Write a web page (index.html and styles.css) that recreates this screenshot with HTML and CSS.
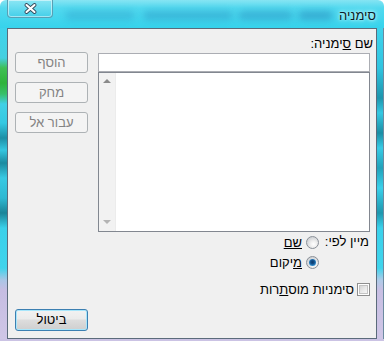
FILE: index.html
```html
<!DOCTYPE html>
<html lang="he">
<head>
<meta charset="utf-8">
<title>סימניה</title>
<link rel="stylesheet" href="styles.css">
</head>
<body>
<div class="window">
  <div class="titlebar">
    <div class="close">
      <svg width="13" height="11" viewBox="0 0 13 11">
        <path d="M2.5 2 L10.5 9 M10.5 2 L2.5 9" stroke="#34485a" stroke-width="3.8" stroke-linecap="round" fill="none"/>
        <path d="M2.5 2 L10.5 9 M10.5 2 L2.5 9" stroke="#ffffff" stroke-width="2.1" stroke-linecap="round" fill="none"/>
      </svg>
    </div>
    <div class="blur-area"><div class="smudge s1"></div><div class="smudge s2"></div><div class="smudge s3"></div><div class="smudge s4"></div></div>
    <div class="title">סימניה</div>
  </div>
  <div class="middle">
    <div class="edge edge-left"></div>
    <div class="client">
      <div class="top-row">
        <div class="main-col">
          <div class="label name-label">שם <u>ס</u>ימניה:</div>
          <div class="textbox"></div>
          <div class="listbox">
            <div class="list-items"></div>
            <div class="scrollbar">
              <span class="arrow up"></span>
              <span class="arrow down"></span>
            </div>
          </div>
          <div class="sort">
            <div class="sort-label">מיין לפי:</div>
            <div class="radios">
              <div class="option"><span class="radio"></span><span><u>שם</u></span></div>
              <div class="option"><span class="radio checked"></span><span><u>מ</u>יקום</span></div>
            </div>
          </div>
        </div>
        <div class="btn-col">
          <div class="btn disabled">הוסף</div>
          <div class="btn disabled">מחק</div>
          <div class="btn disabled">עבור אל</div>
        </div>
      </div>
      <div class="check-row"><span class="checkbox"></span><span>סימניות מוס<u>ת</u>רות</span></div>
      <div class="bottom-row"><div class="btn default">ביטול</div></div>
    </div>
    <div class="edge edge-right"></div>
  </div>
  <div class="bottom-edge"></div>
</div>
</body>
</html>
```
FILE: styles.css
```css
html, body {
  margin: 0;
  padding: 0;
  width: 384px;
  height: 341px;
  overflow: hidden;
  background: #ffffff;
}
body {
  font-family: "Liberation Sans", Arial, sans-serif;
  font-size: 13px;
  color: #000;
}
.window {
  width: 384px;
  height: 341px;
  display: flex;
  flex-direction: column;
  background: linear-gradient(to bottom, #86e4f3 0, #52d9ef 8px, #36d3ec 28px);
  border-radius: 6px 6px 0 0;
  overflow: hidden;
}
.titlebar {
  height: 28px;
  display: flex;
  flex-direction: row;
  align-items: flex-start;
}
.close {
  margin-left: 7px;
  width: 44px;
  height: 17px;
  border: 1px solid #5a9fb4;
  border-top: none;
  border-radius: 0 0 4px 4px;
  background: linear-gradient(to bottom, #8be6f4 0, #66dbef 50%, #45cfe9 100%);
  box-shadow: inset 0 0 0 1px rgba(255,255,255,0.5);
  display: flex;
  align-items: center;
  justify-content: center;
}
.blur-area {
  flex: 1;
  height: 28px;
  position: relative;
}
.smudge {
  position: absolute;
  top: 11px;
  height: 9px;
  border-radius: 5px;
  background: #2a8fbf;
  filter: blur(3.5px);
}
.s1 { left: 12px; width: 70px; opacity: 0.35; }
.s2 { left: 90px; width: 90px; opacity: 0.45; }
.s3 { left: 185px; width: 55px; opacity: 0.5; }
.s4 { left: 245px; width: 35px; opacity: 0.6; }
.title {
  margin-right: 8px;
  margin-top: 8px;
  direction: rtl;
  font-size: 13px;
  color: #0b1a26;
  text-shadow: 0 0 6px #d9fbff, 0 0 3px #d9fbff;
}
.middle {
  display: flex;
  flex-direction: row;
  height: 311px;
}
.edge {
  width: 7px;
  height: 311px;
}
.edge-left {
  background: linear-gradient(to bottom,
    #3fd3ec 0, #44cfe0 30px, #3fbf55 40px, #2fb33c 55px, #37c06a 66px, #3fd0e6 76px,
    #34c8e2 95px, #1d8fa6 110px, #34c6e0 122px, #1b8aa0 135px, #38c9e3 150px,
    #2eb8d2 170px, #1a8498 185px, #3ad0ea 200px, #3fd4ec 240px, #a9c6e6 252px,
    #c6bde2 262px, #cfc6e6 311px);
}
.edge-right {
  background: linear-gradient(to bottom,
    #3fd3ec 0, #30c4e0 40px, #1e95ad 70px, #35c8e2 85px, #1b8ea5 105px, #38cbe5 120px,
    #22a2ba 140px, #3ad0ea 160px, #1f97ae 185px, #3ad1eb 200px, #3fd4ec 240px,
    #aecbe8 252px, #c8bfe3 262px, #cfc6e6 311px);
  box-shadow: inset -1px 0 0 #6c8aa0;
}
.bottom-edge {
  flex: 1;
  background: #cbc3e4;
}
.client {
  width: 370px;
  height: 311px;
  box-sizing: border-box;
  border: 1px solid #5b6b7b;
  background: #f0f0f0;
  direction: rtl;
  display: flex;
  flex-direction: column;
  padding: 7px 6px 0 7px;
}
.top-row {
  display: flex;
  flex-direction: row;
  gap: 10px;
}
.main-col {
  width: 272px;
  display: flex;
  flex-direction: column;
}
.label {
  height: 17px;
  line-height: 15px;
}
.name-label {
  margin-right: -3px;
}
.textbox {
  height: 19px;
  box-sizing: border-box;
  border: 1px solid #abadb3;
  background: #fff;
}
.listbox {
  height: 160px;
  box-sizing: border-box;
  border: 1px solid #828790;
  background: #fff;
  display: flex;
  flex-direction: row;
}
.list-items {
  flex: 1;
}
.scrollbar {
  width: 17px;
  background: #f2f2f2;
  display: flex;
  flex-direction: column;
  justify-content: space-between;
  align-items: center;
  padding: 6px 0 7px;
  box-sizing: border-box;
  border-right: 1px solid #ececec;
}
.arrow {
  width: 0;
  height: 0;
  border-left: 4px solid transparent;
  border-right: 4px solid transparent;
}
.arrow.up { border-bottom: 4px solid #8a8a8a; }
.arrow.down { border-top: 4px solid #b4b4b4; }
.sort {
  display: flex;
  flex-direction: row;
  padding-right: 1px;
}
.sort-label {
  width: 50px;
  height: 20px;
  line-height: 20px;
  white-space: nowrap;
}
.radios {
  display: flex;
  flex-direction: column;
}
.option {
  height: 20px;
  display: flex;
  flex-direction: row;
  align-items: center;
  gap: 4px;
}
.radio {
  width: 13px;
  height: 13px;
  box-sizing: border-box;
  border-radius: 50%;
  border: 1px solid #8a9098;
  background: radial-gradient(circle at 60% 65%, #ffffff 0, #f0f0f0 30%, #cfd1d4 75%);
  position: relative;
}
.radio.checked::after {
  content: "";
  position: absolute;
  left: 2px;
  top: 2px;
  width: 7px;
  height: 7px;
  border-radius: 50%;
  background: radial-gradient(circle at 50% 45%, #0c3a6a 0, #13508c 35%, #3aa0e0 80%, #8cd2f7 100%);
}
.btn-col {
  width: 73px;
  margin-top: 16px;
  display: flex;
  flex-direction: column;
  gap: 9px;
}
.btn {
  height: 21px;
  box-sizing: border-box;
  border-radius: 3px;
  text-align: center;
  line-height: 19px;
}
.btn.disabled {
  border: 1px solid #adb2b5;
  background: #f4f4f4;
  color: #838383;
}
.check-row {
  margin-top: 8px;
  height: 18px;
  display: flex;
  flex-direction: row;
  align-items: center;
  gap: 3px;
}
.checkbox {
  width: 13px;
  height: 13px;
  box-sizing: border-box;
  border: 1px solid #8f8f8f;
  background: #fff;
  position: relative;
}
.checkbox::after {
  content: "";
  position: absolute;
  left: 1px;
  top: 1px;
  right: 1px;
  bottom: 1px;
  background: linear-gradient(135deg, #d6d6d6 0, #ececec 60%, #f6f6f6 100%);
  border: 1px solid #c4c4c4;
  box-sizing: border-box;
}
.bottom-row {
  margin-top: 11px;
  display: flex;
  flex-direction: row;
  justify-content: flex-end;
}
.btn.default {
  width: 73px;
  height: 22px;
  line-height: 20px;
  border: 1px solid #3c7fb1;
  background: linear-gradient(to bottom, #f2f2f2 0, #ebebeb 45%, #dddddd 50%, #cfcfcf 100%);
  box-shadow: inset 0 0 0 1px #a8e6fb;
}
```
